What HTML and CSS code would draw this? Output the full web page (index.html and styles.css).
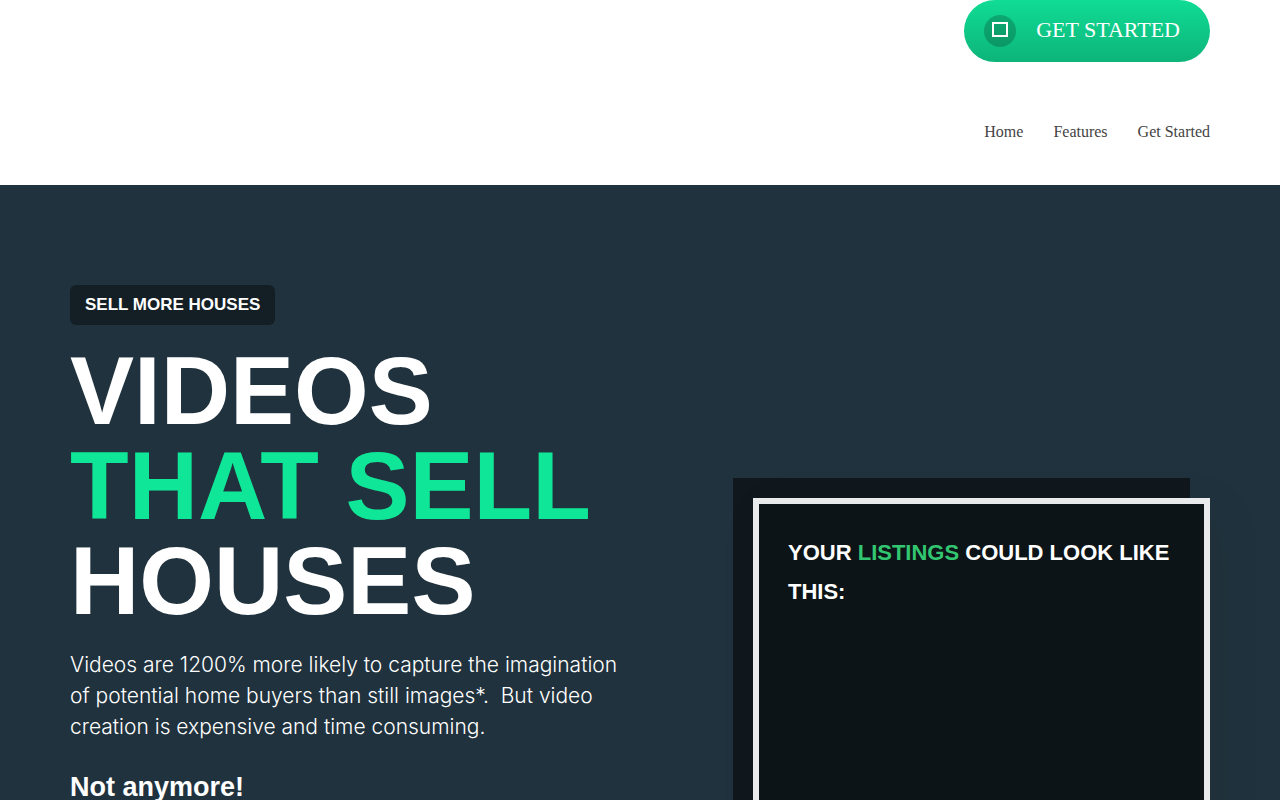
FILE: index.html
```html
<!DOCTYPE html>
<html lang="en">
<head>
    <meta charset="UTF-8">
    <meta name="viewport" content="width=device-width, initial-scale=1.0">
    <title>Videos That Sell Houses</title>
    <link rel="stylesheet" href="styles.css">
</head>
<body>
    <header class="header">
        <div class="container header-inner">
            <a class="cta" href="#get-started">
                <span class="cta-icon">
                    <svg width="16" height="16" viewBox="0 0 16 16" aria-hidden="true">
                        <rect x="1" y="0" width="14" height="13" fill="none" stroke="#fff" stroke-width="2" transform="translate(0 1)"/>
                    </svg>
                </span>
                <span class="cta-label">GET STARTED</span>
            </a>
            <nav class="nav">
                <a href="#home">Home</a>
                <a href="#features">Features</a>
                <a href="#get-started">Get Started</a>
            </nav>
        </div>
    </header>

    <main class="hero">
        <div class="container hero-inner">
            <section class="intro">
                <p class="badge">SELL MORE HOUSES</p>
                <h1>VIDEOS<br><span class="accent">THAT SELL</span><br>HOUSES</h1>
                <p class="lead">Videos are 1200% more likely to capture the imagination of potential home buyers than still images*.&nbsp; But video creation is expensive and time consuming.</p>
                <h2>Not anymore!</h2>
            </section>
            <section class="preview">
                <h3>YOUR <span class="listings">LISTINGS</span> COULD LOOK LIKE THIS:</h3>
            </section>
        </div>
    </main>
</body>
</html>
```
FILE: styles.css
```css
* {
    box-sizing: border-box;
}
body {
    margin: 0;
    background-color: #fff;
    font-family: "Liberation Serif", "Times New Roman", serif;
}
h1, h2, h3, p {
    margin: 0;
}
a {
    text-decoration: none;
}
.container {
    max-width: 1140px;
    margin: 0 auto;
}

/* Header */
.header-inner {
    display: flex;
    flex-direction: column;
    align-items: flex-end;
    gap: 60px;
    padding-bottom: 43px;
}
.cta {
    display: flex;
    align-items: center;
    gap: 20px;
    padding: 15px 30px 15px 20px;
    border-radius: 31px;
    background: linear-gradient(#10dc94, #0db47a);
    color: #fff;
    font-size: 22px;
}
.cta-label {
    padding-bottom: 2px;
    line-height: 30px;
}
.cta-icon {
    display: flex;
    align-items: center;
    justify-content: center;
    width: 32px;
    height: 32px;
    padding-bottom: 2px;
    border-radius: 50%;
    background-color: rgba(0, 0, 0, 0.2);
}
.nav {
    display: flex;
    gap: 30px;
    font-size: 16px;
    line-height: 20px;
}
.nav a {
    color: #444;
}

/* Hero */
.hero {
    background-color: #20323d;
    font-family: "Liberation Sans", Arial, sans-serif;
    color: #fff;
}
.hero-inner {
    position: relative;
    z-index: 0;
    display: grid;
    grid-template-columns: 560fr 457fr;
    gap: 123px;
    padding: 100px 0;
}
.badge {
    display: inline-block;
    padding: 9px 15px;
    border-radius: 6px;
    background-color: #141f25;
    font-size: 17px;
    font-weight: bold;
    line-height: 22px;
}
h1 {
    margin-top: 18px;
    font-size: 96px;
    line-height: 95px;
}
.accent {
    color: #10e698;
}
.lead {
    margin-top: 21px;
    font-family: "Inter", "Liberation Sans", sans-serif;
    font-size: 21px;
    font-weight: 300;
    line-height: 31px;
}
h2 {
    margin-top: 26px;
    font-size: 27px;
    line-height: 38px;
}
.preview {
    position: relative;
    min-height: 420px;
    margin-top: 213px;
    padding: 29px;
    border: 6px solid #e8eaeb;
    background-color: #0c1417;
    box-shadow: 10px 10px 50px rgba(0, 0, 0, 0.05);
}
/* dark panel offset behind the card */
.preview::before {
    content: "";
    position: absolute;
    z-index: -1;
    top: -26px;
    right: 14px;
    bottom: 14px;
    left: -26px;
    background-color: #10181e;
}
h3 {
    font-size: 22px;
    line-height: 39px;
}
.listings {
    color: #32c671;
}
```
